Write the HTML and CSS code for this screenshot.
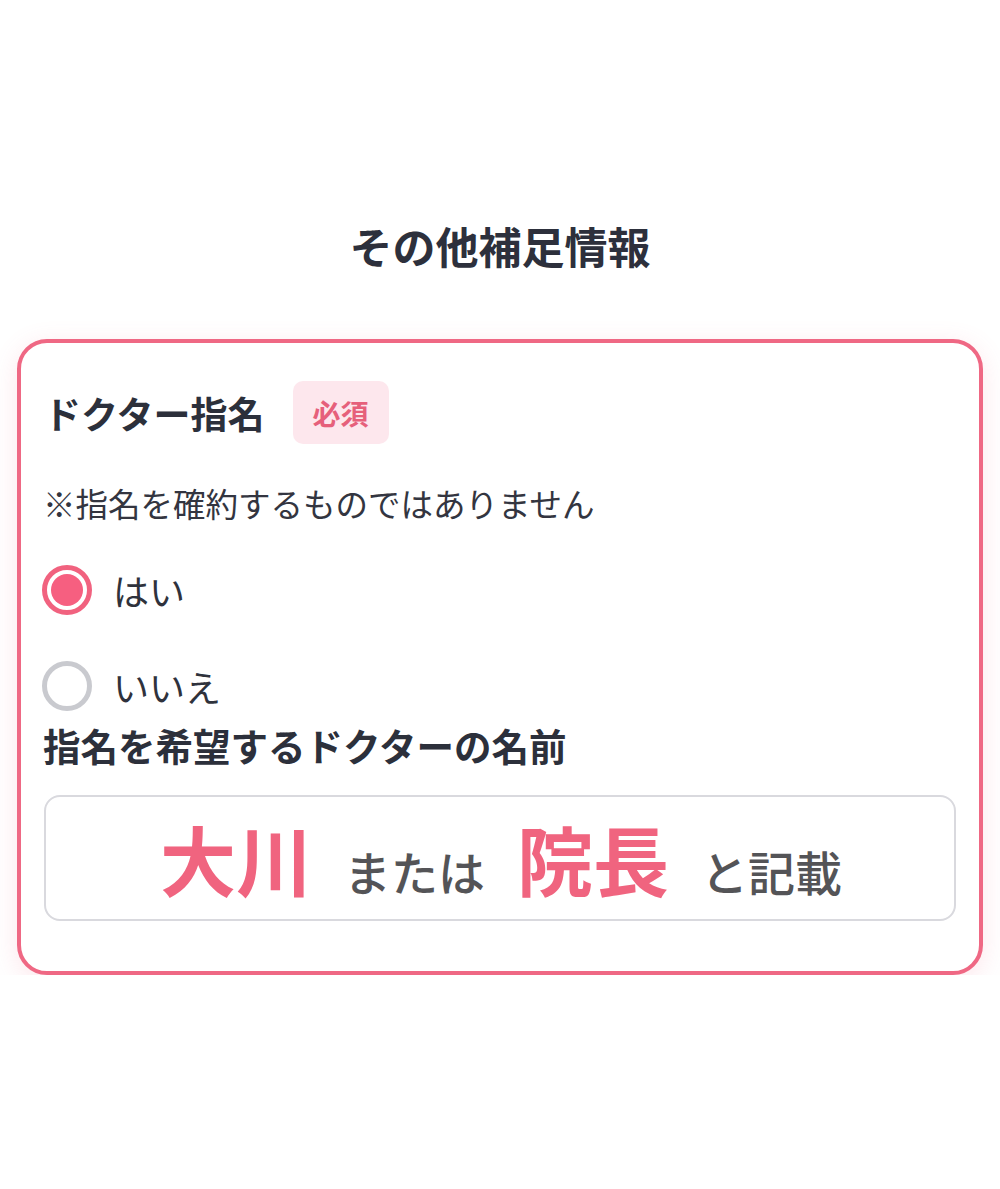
FILE: index.html
```html
<!DOCTYPE html>
<html lang="ja">
<head>
<meta charset="utf-8">
<title>その他補足情報</title>
<link rel="stylesheet" href="styles.css">
</head>
<body>
<main class="page">
  <h2 class="section-title">その他補足情報</h2>
  <section class="card">
    <div class="field-head">
      <span class="field-label">ドクター指名</span>
      <span class="badge">必須</span>
    </div>
    <p class="note">※指名を確約するものではありません</p>
    <div class="radio-list">
      <label class="radio-row">
        <span class="radio radio-on"><span class="radio-dot"></span></span>
        <span class="radio-text">はい</span>
      </label>
      <label class="radio-row">
        <span class="radio radio-off"></span>
        <span class="radio-text">いいえ</span>
      </label>
    </div>
    <div class="sub-label">指名を希望するドクターの名前</div>
    <div class="name-input">
      <span class="hl">大川</span>
      <span class="plain">または</span>
      <span class="hl">院長</span>
      <span class="plain">と記載</span>
    </div>
  </section>
</main>
</body>
</html>
```
FILE: styles.css
```css
html, body {
  margin: 0;
  padding: 0;
  background: #ffffff;
}
body {
  font-family: "Noto Sans CJK JP", "Noto Sans", sans-serif;
  color: #2c303b;
}
.page {
  padding: 215px 17px 0;
}
.section-title {
  margin: 0;
  text-align: center;
  font-size: 43px;
  line-height: 60px;
  font-weight: 700;
  color: #2d303c;
}
.card {
  margin-top: 64px;
  border: 4px solid #ef6884;
  border-radius: 30px;
  padding: 38px 23px 50px;
  background: #ffffff;
  box-shadow: 0 6px 26px rgba(240, 100, 130, 0.16);
}
.field-head {
  display: flex;
  align-items: center;
  gap: 28px;
  height: 63px;
}
.field-label {
  font-size: 37px;
  font-weight: 700;
  line-height: 44px;
}
.badge {
  display: flex;
  align-items: center;
  justify-content: center;
  width: 96px;
  height: 63px;
  border-radius: 10px;
  background: #fde7ed;
  color: #e6607b;
  font-size: 28px;
  font-weight: 700;
}
.note {
  margin: 39px 0 0 -1px;
  font-size: 32.5px;
  line-height: 40px;
  color: #333540;
}
.radio-list {
  margin-top: 42px;
  display: flex;
  flex-direction: column;
  gap: 46px;
}
.radio-row {
  display: flex;
  align-items: center;
  gap: 21px;
  height: 50px;
}
.radio {
  box-sizing: border-box;
  width: 50px;
  height: 50px;
  border-radius: 50%;
  display: flex;
  align-items: center;
  justify-content: center;
  flex: none;
  margin-left: -2px;
}
.radio-on {
  border: 5px solid #f1627f;
}
.radio-dot {
  width: 32px;
  height: 32px;
  border-radius: 50%;
  background: #f65f80;
}
.radio-off {
  border: 5px solid #c9cacf;
}
.radio-text {
  font-size: 36px;
  line-height: 44px;
  color: #2f323c;
}
.sub-label {
  margin: 12px 0 0 -1px;
  font-size: 37.5px;
  line-height: 44px;
  font-weight: 700;
}
.name-input {
  margin-top: 28px;
  box-sizing: border-box;
  height: 126px;
  border: 2px solid #d9d9de;
  border-radius: 16px;
  display: flex;
  align-items: baseline;
  justify-content: center;
  gap: 32px;
  padding-top: 13px;
  padding-left: 2px;
}
.hl {
  font-size: 76px;
  line-height: 96px;
  font-weight: 700;
  color: #f0647f;
}
.plain {
  font-size: 47px;
  line-height: 96px;
  font-weight: 500;
  color: #545457;
}
```
